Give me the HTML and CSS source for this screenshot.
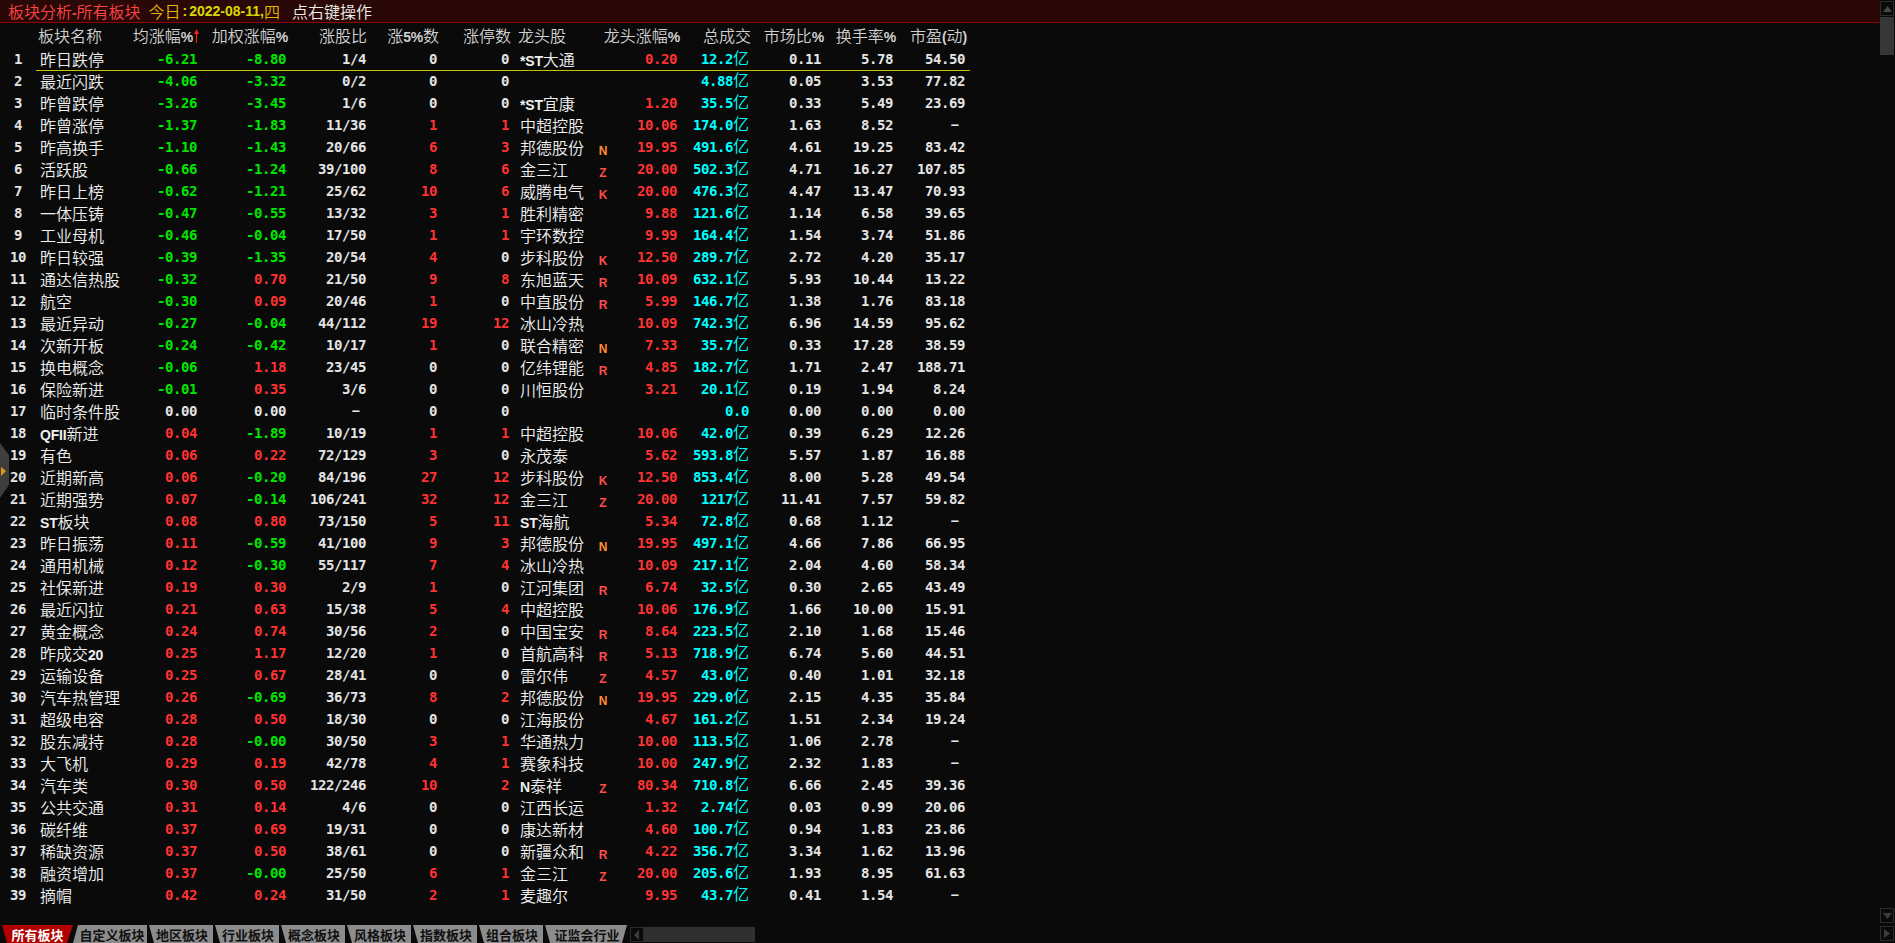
FILE: index.html
```html
<!DOCTYPE html>
<html lang="zh-CN">
<head>
<meta charset="utf-8">
<title>板块分析-所有板块</title>
<link rel="stylesheet" href="styles.css">
</head>
<body>
<div class="app">
<div class="left">
<header class="title">
<span class="zh t-red">板块分析<b class="l">-</b>所有板块</span>
<span class="zh t-gold">今日</span><span class="t-colon">:</span><span class="t-date">2022-08-11,</span><span class="zh t-gold">四</span>
<span class="zh t-hint">点右键操作</span>
</header>
<main class="table">
<div class="head zh">
<span></span><span class="nm">板块名称</span><span>均涨幅<b class="l">%</b><svg class="arrow" width="5" height="14" viewBox="0 0 5 14"><path d="M2.5 0 L5 5 L3 5 L3 14 L2 14 L2 5 L0 5 Z" fill="#ff2020"/></svg></span><span>加权涨幅<b class="l">%</b></span><span>涨股比</span><span>涨<b class="l">5%</b>数</span><span>涨停数</span><span class="ld">龙头股</span><span>龙头涨幅<b class="l">%</b></span><span>总成交</span><span>市场比<b class="l">%</b></span><span>换手率<b class="l">%</b></span><span>市盈<b class="l">(</b>动<b class="l">)</b></span>
</div>
<div class="row cur"><span class="idx">1</span><span class="nm zh">昨日跌停</span><span class="g">-6.21</span><span class="g">-8.80</span><span>1/4</span><span>0</span><span>0</span><span class="ld zh"><b class="l">*ST</b>大通</span><span class="fl"></span><span class="r">0.20</span><span class="c">12.2<i class="zh">亿</i></span><span>0.11</span><span>5.78</span><span>54.50</span></div>
<div class="row"><span class="idx">2</span><span class="nm zh">最近闪跌</span><span class="g">-4.06</span><span class="g">-3.32</span><span>0/2</span><span>0</span><span>0</span><span class="ld zh"></span><span class="fl"></span><span class="r"></span><span class="c">4.88<i class="zh">亿</i></span><span>0.05</span><span>3.53</span><span>77.82</span></div>
<div class="row"><span class="idx">3</span><span class="nm zh">昨曾跌停</span><span class="g">-3.26</span><span class="g">-3.45</span><span>1/6</span><span>0</span><span>0</span><span class="ld zh"><b class="l">*ST</b>宜康</span><span class="fl"></span><span class="r">1.20</span><span class="c">35.5<i class="zh">亿</i></span><span>0.33</span><span>5.49</span><span>23.69</span></div>
<div class="row"><span class="idx">4</span><span class="nm zh">昨曾涨停</span><span class="g">-1.37</span><span class="g">-1.83</span><span>11/36</span><span class="r">1</span><span class="r">1</span><span class="ld zh">中超控股</span><span class="fl"></span><span class="r">10.06</span><span class="c">174.0<i class="zh">亿</i></span><span>1.63</span><span>8.52</span><span class="dash">—</span></div>
<div class="row"><span class="idx">5</span><span class="nm zh">昨高换手</span><span class="g">-1.10</span><span class="g">-1.43</span><span>20/66</span><span class="r">6</span><span class="r">3</span><span class="ld zh">邦德股份</span><span class="fl o">N</span><span class="r">19.95</span><span class="c">491.6<i class="zh">亿</i></span><span>4.61</span><span>19.25</span><span>83.42</span></div>
<div class="row"><span class="idx">6</span><span class="nm zh">活跃股</span><span class="g">-0.66</span><span class="g">-1.24</span><span>39/100</span><span class="r">8</span><span class="r">6</span><span class="ld zh">金三江</span><span class="fl">Z</span><span class="r">20.00</span><span class="c">502.3<i class="zh">亿</i></span><span>4.71</span><span>16.27</span><span>107.85</span></div>
<div class="row"><span class="idx">7</span><span class="nm zh">昨日上榜</span><span class="g">-0.62</span><span class="g">-1.21</span><span>25/62</span><span class="r">10</span><span class="r">6</span><span class="ld zh">威腾电气</span><span class="fl">K</span><span class="r">20.00</span><span class="c">476.3<i class="zh">亿</i></span><span>4.47</span><span>13.47</span><span>70.93</span></div>
<div class="row"><span class="idx">8</span><span class="nm zh">一体压铸</span><span class="g">-0.47</span><span class="g">-0.55</span><span>13/32</span><span class="r">3</span><span class="r">1</span><span class="ld zh">胜利精密</span><span class="fl"></span><span class="r">9.88</span><span class="c">121.6<i class="zh">亿</i></span><span>1.14</span><span>6.58</span><span>39.65</span></div>
<div class="row"><span class="idx">9</span><span class="nm zh">工业母机</span><span class="g">-0.46</span><span class="g">-0.04</span><span>17/50</span><span class="r">1</span><span class="r">1</span><span class="ld zh">宇环数控</span><span class="fl"></span><span class="r">9.99</span><span class="c">164.4<i class="zh">亿</i></span><span>1.54</span><span>3.74</span><span>51.86</span></div>
<div class="row"><span class="idx">10</span><span class="nm zh">昨日较强</span><span class="g">-0.39</span><span class="g">-1.35</span><span>20/54</span><span class="r">4</span><span>0</span><span class="ld zh">步科股份</span><span class="fl">K</span><span class="r">12.50</span><span class="c">289.7<i class="zh">亿</i></span><span>2.72</span><span>4.20</span><span>35.17</span></div>
<div class="row"><span class="idx">11</span><span class="nm zh">通达信热股</span><span class="g">-0.32</span><span class="r">0.70</span><span>21/50</span><span class="r">9</span><span class="r">8</span><span class="ld zh">东旭蓝天</span><span class="fl">R</span><span class="r">10.09</span><span class="c">632.1<i class="zh">亿</i></span><span>5.93</span><span>10.44</span><span>13.22</span></div>
<div class="row"><span class="idx">12</span><span class="nm zh">航空</span><span class="g">-0.30</span><span class="r">0.09</span><span>20/46</span><span class="r">1</span><span>0</span><span class="ld zh">中直股份</span><span class="fl">R</span><span class="r">5.99</span><span class="c">146.7<i class="zh">亿</i></span><span>1.38</span><span>1.76</span><span>83.18</span></div>
<div class="row"><span class="idx">13</span><span class="nm zh">最近异动</span><span class="g">-0.27</span><span class="g">-0.04</span><span>44/112</span><span class="r">19</span><span class="r">12</span><span class="ld zh">冰山冷热</span><span class="fl"></span><span class="r">10.09</span><span class="c">742.3<i class="zh">亿</i></span><span>6.96</span><span>14.59</span><span>95.62</span></div>
<div class="row"><span class="idx">14</span><span class="nm zh">次新开板</span><span class="g">-0.24</span><span class="g">-0.42</span><span>10/17</span><span class="r">1</span><span>0</span><span class="ld zh">联合精密</span><span class="fl o">N</span><span class="r">7.33</span><span class="c">35.7<i class="zh">亿</i></span><span>0.33</span><span>17.28</span><span>38.59</span></div>
<div class="row"><span class="idx">15</span><span class="nm zh">换电概念</span><span class="g">-0.06</span><span class="r">1.18</span><span>23/45</span><span>0</span><span>0</span><span class="ld zh">亿纬锂能</span><span class="fl">R</span><span class="r">4.85</span><span class="c">182.7<i class="zh">亿</i></span><span>1.71</span><span>2.47</span><span>188.71</span></div>
<div class="row"><span class="idx">16</span><span class="nm zh">保险新进</span><span class="g">-0.01</span><span class="r">0.35</span><span>3/6</span><span>0</span><span>0</span><span class="ld zh">川恒股份</span><span class="fl"></span><span class="r">3.21</span><span class="c">20.1<i class="zh">亿</i></span><span>0.19</span><span>1.94</span><span>8.24</span></div>
<div class="row"><span class="idx">17</span><span class="nm zh">临时条件股</span><span>0.00</span><span>0.00</span><span class="dash">—</span><span>0</span><span>0</span><span class="ld zh"></span><span class="fl"></span><span class="r"></span><span class="c">0.0</span><span>0.00</span><span>0.00</span><span>0.00</span></div>
<div class="row"><span class="idx">18</span><span class="nm zh"><b class="l">QFII</b>新进</span><span class="r">0.04</span><span class="g">-1.89</span><span>10/19</span><span class="r">1</span><span class="r">1</span><span class="ld zh">中超控股</span><span class="fl"></span><span class="r">10.06</span><span class="c">42.0<i class="zh">亿</i></span><span>0.39</span><span>6.29</span><span>12.26</span></div>
<div class="row"><span class="idx">19</span><span class="nm zh">有色</span><span class="r">0.06</span><span class="r">0.22</span><span>72/129</span><span class="r">3</span><span>0</span><span class="ld zh">永茂泰</span><span class="fl"></span><span class="r">5.62</span><span class="c">593.8<i class="zh">亿</i></span><span>5.57</span><span>1.87</span><span>16.88</span></div>
<div class="row"><span class="idx">20</span><span class="nm zh">近期新高</span><span class="r">0.06</span><span class="g">-0.20</span><span>84/196</span><span class="r">27</span><span class="r">12</span><span class="ld zh">步科股份</span><span class="fl">K</span><span class="r">12.50</span><span class="c">853.4<i class="zh">亿</i></span><span>8.00</span><span>5.28</span><span>49.54</span></div>
<div class="row"><span class="idx">21</span><span class="nm zh">近期强势</span><span class="r">0.07</span><span class="g">-0.14</span><span>106/241</span><span class="r">32</span><span class="r">12</span><span class="ld zh">金三江</span><span class="fl">Z</span><span class="r">20.00</span><span class="c">1217<i class="zh">亿</i></span><span>11.41</span><span>7.57</span><span>59.82</span></div>
<div class="row"><span class="idx">22</span><span class="nm zh"><b class="l">ST</b>板块</span><span class="r">0.08</span><span class="r">0.80</span><span>73/150</span><span class="r">5</span><span class="r">11</span><span class="ld zh"><b class="l">ST</b>海航</span><span class="fl"></span><span class="r">5.34</span><span class="c">72.8<i class="zh">亿</i></span><span>0.68</span><span>1.12</span><span class="dash">—</span></div>
<div class="row"><span class="idx">23</span><span class="nm zh">昨日振荡</span><span class="r">0.11</span><span class="g">-0.59</span><span>41/100</span><span class="r">9</span><span class="r">3</span><span class="ld zh">邦德股份</span><span class="fl o">N</span><span class="r">19.95</span><span class="c">497.1<i class="zh">亿</i></span><span>4.66</span><span>7.86</span><span>66.95</span></div>
<div class="row"><span class="idx">24</span><span class="nm zh">通用机械</span><span class="r">0.12</span><span class="g">-0.30</span><span>55/117</span><span class="r">7</span><span class="r">4</span><span class="ld zh">冰山冷热</span><span class="fl"></span><span class="r">10.09</span><span class="c">217.1<i class="zh">亿</i></span><span>2.04</span><span>4.60</span><span>58.34</span></div>
<div class="row"><span class="idx">25</span><span class="nm zh">社保新进</span><span class="r">0.19</span><span class="r">0.30</span><span>2/9</span><span class="r">1</span><span>0</span><span class="ld zh">江河集团</span><span class="fl">R</span><span class="r">6.74</span><span class="c">32.5<i class="zh">亿</i></span><span>0.30</span><span>2.65</span><span>43.49</span></div>
<div class="row"><span class="idx">26</span><span class="nm zh">最近闪拉</span><span class="r">0.21</span><span class="r">0.63</span><span>15/38</span><span class="r">5</span><span class="r">4</span><span class="ld zh">中超控股</span><span class="fl"></span><span class="r">10.06</span><span class="c">176.9<i class="zh">亿</i></span><span>1.66</span><span>10.00</span><span>15.91</span></div>
<div class="row"><span class="idx">27</span><span class="nm zh">黄金概念</span><span class="r">0.24</span><span class="r">0.74</span><span>30/56</span><span class="r">2</span><span>0</span><span class="ld zh">中国宝安</span><span class="fl">R</span><span class="r">8.64</span><span class="c">223.5<i class="zh">亿</i></span><span>2.10</span><span>1.68</span><span>15.46</span></div>
<div class="row"><span class="idx">28</span><span class="nm zh">昨成交<b class="l">20</b></span><span class="r">0.25</span><span class="r">1.17</span><span>12/20</span><span class="r">1</span><span>0</span><span class="ld zh">首航高科</span><span class="fl">R</span><span class="r">5.13</span><span class="c">718.9<i class="zh">亿</i></span><span>6.74</span><span>5.60</span><span>44.51</span></div>
<div class="row"><span class="idx">29</span><span class="nm zh">运输设备</span><span class="r">0.25</span><span class="r">0.67</span><span>28/41</span><span>0</span><span>0</span><span class="ld zh">雷尔伟</span><span class="fl">Z</span><span class="r">4.57</span><span class="c">43.0<i class="zh">亿</i></span><span>0.40</span><span>1.01</span><span>32.18</span></div>
<div class="row"><span class="idx">30</span><span class="nm zh">汽车热管理</span><span class="r">0.26</span><span class="g">-0.69</span><span>36/73</span><span class="r">8</span><span class="r">2</span><span class="ld zh">邦德股份</span><span class="fl o">N</span><span class="r">19.95</span><span class="c">229.0<i class="zh">亿</i></span><span>2.15</span><span>4.35</span><span>35.84</span></div>
<div class="row"><span class="idx">31</span><span class="nm zh">超级电容</span><span class="r">0.28</span><span class="r">0.50</span><span>18/30</span><span>0</span><span>0</span><span class="ld zh">江海股份</span><span class="fl"></span><span class="r">4.67</span><span class="c">161.2<i class="zh">亿</i></span><span>1.51</span><span>2.34</span><span>19.24</span></div>
<div class="row"><span class="idx">32</span><span class="nm zh">股东减持</span><span class="r">0.28</span><span class="g">-0.00</span><span>30/50</span><span class="r">3</span><span class="r">1</span><span class="ld zh">华通热力</span><span class="fl"></span><span class="r">10.00</span><span class="c">113.5<i class="zh">亿</i></span><span>1.06</span><span>2.78</span><span class="dash">—</span></div>
<div class="row"><span class="idx">33</span><span class="nm zh">大飞机</span><span class="r">0.29</span><span class="r">0.19</span><span>42/78</span><span class="r">4</span><span class="r">1</span><span class="ld zh">赛象科技</span><span class="fl"></span><span class="r">10.00</span><span class="c">247.9<i class="zh">亿</i></span><span>2.32</span><span>1.83</span><span class="dash">—</span></div>
<div class="row"><span class="idx">34</span><span class="nm zh">汽车类</span><span class="r">0.30</span><span class="r">0.50</span><span>122/246</span><span class="r">10</span><span class="r">2</span><span class="ld zh"><b class="l">N</b>泰祥</span><span class="fl">Z</span><span class="r">80.34</span><span class="c">710.8<i class="zh">亿</i></span><span>6.66</span><span>2.45</span><span>39.36</span></div>
<div class="row"><span class="idx">35</span><span class="nm zh">公共交通</span><span class="r">0.31</span><span class="r">0.14</span><span>4/6</span><span>0</span><span>0</span><span class="ld zh">江西长运</span><span class="fl"></span><span class="r">1.32</span><span class="c">2.74<i class="zh">亿</i></span><span>0.03</span><span>0.99</span><span>20.06</span></div>
<div class="row"><span class="idx">36</span><span class="nm zh">碳纤维</span><span class="r">0.37</span><span class="r">0.69</span><span>19/31</span><span>0</span><span>0</span><span class="ld zh">康达新材</span><span class="fl"></span><span class="r">4.60</span><span class="c">100.7<i class="zh">亿</i></span><span>0.94</span><span>1.83</span><span>23.86</span></div>
<div class="row"><span class="idx">37</span><span class="nm zh">稀缺资源</span><span class="r">0.37</span><span class="r">0.50</span><span>38/61</span><span>0</span><span>0</span><span class="ld zh">新疆众和</span><span class="fl">R</span><span class="r">4.22</span><span class="c">356.7<i class="zh">亿</i></span><span>3.34</span><span>1.62</span><span>13.96</span></div>
<div class="row"><span class="idx">38</span><span class="nm zh">融资增加</span><span class="r">0.37</span><span class="g">-0.00</span><span>25/50</span><span class="r">6</span><span class="r">1</span><span class="ld zh">金三江</span><span class="fl">Z</span><span class="r">20.00</span><span class="c">205.6<i class="zh">亿</i></span><span>1.93</span><span>8.95</span><span>61.63</span></div>
<div class="row"><span class="idx">39</span><span class="nm zh">摘帽</span><span class="r">0.42</span><span class="r">0.24</span><span>31/50</span><span class="r">2</span><span class="r">1</span><span class="ld zh">麦趣尔</span><span class="fl"></span><span class="r">9.95</span><span class="c">43.7<i class="zh">亿</i></span><span>0.41</span><span>1.54</span><span class="dash">—</span></div>
</main>
<footer class="tabs">
<span class="tab active">所有板块</span>
<span class="tab wide">自定义板块</span>
<span class="tab">地区板块</span>
<span class="tab">行业板块</span>
<span class="tab">概念板块</span>
<span class="tab">风格板块</span>
<span class="tab">指数板块</span>
<span class="tab">组合板块</span>
<span class="tab last">证监会行业</span>
<div class="hbar">
<span class="sbtn"><svg width="6" height="10" viewBox="0 0 6 10"><path d="M5 0 V10 L0 5 Z" fill="#3c3c3c"/></svg></span>
<span class="htrack"></span>
</div>
</footer>
</div>
<aside class="vbar">
<span class="sbtn"><svg width="9" height="6" viewBox="0 0 9 6"><path d="M4.5 0 L9 6 H0 Z" fill="#484848"/></svg></span>
<span class="thumb"></span>
<span class="vspace"></span>
<span class="sbtn"><svg width="9" height="6" viewBox="0 0 9 6"><path d="M0 0 H9 L4.5 6 Z" fill="#3c3c3c"/></svg></span>
<span class="sbtn end"><svg width="6" height="9" viewBox="0 0 6 9"><path d="M0 0 L6 4.5 L0 9 Z" fill="#3c3c3c"/></svg></span>
</aside>
<svg class="handle" width="10" height="56" viewBox="0 0 10 56"><path d="M0 0 L9 12 V42 L0 55 Z" fill="#3e3e3e"/><path d="M1 24 L6 28 L1 33 Z" fill="#e09a10"/></svg>
</div>
</body>
</html>
```
FILE: styles.css
```css
* { box-sizing: border-box; }
html, body { margin: 0; height: 100%; overflow: hidden; background: #0a0a0a; }
body {
  font-family: "DejaVu Sans Mono", "Noto Sans CJK SC", monospace;
  font-size: 14px;
  font-weight: 700;
  letter-spacing: -0.43px;
  color: #e4e4e4;
}
.zh {
  font-family: "Noto Sans CJK SC", "Liberation Sans", sans-serif;
  font-size: 16px;
  font-weight: 350;
  letter-spacing: 0;
}
.l {
  font-family: "Liberation Sans", sans-serif;
  font-size: 14px;
  font-weight: 700;
  letter-spacing: -0.2px;
}
i { font-style: normal; }

.app { display: flex; height: 943px; }
.left { flex: 1; min-width: 0; display: flex; flex-direction: column; }

.title {
  height: 23px;
  flex: none;
  display: flex;
  align-items: center;
  padding-left: 8px;
  background: #2a0808;
  border-bottom: 1px solid #8c0000;
}
.t-red { color: #ff4444; margin-right: 8px; }
.t-gold { color: #e0b800; }
.t-colon, .t-date {
  font-family: "Liberation Sans", sans-serif;
  font-size: 14px;
  letter-spacing: 0;
  color: #d8d800;
}
.t-colon { margin: 0 2px; }
.t-hint { color: #f0f0e8; margin-left: 12px; }

.table { flex: 1; min-height: 0; }
.head, .row { display: grid; width: 970px; text-align: right; white-space: nowrap; }
.head {
  height: 26px;
  padding-bottom: 3px;
  align-items: center;
  color: #d0d0d0;
  grid-template-columns: 36px 92px 71px 89px 79px 72px 72px 86px 83px 71px 73px 72px 71px;
}
.head .nm { padding-left: 2px; text-align: left; }
.head .ld { padding-left: 7px; text-align: left; }
.arrow { margin-left: 1px; vertical-align: -1px; }

.row {
  height: 22px;
  line-height: 21px;
  align-items: start;
  grid-template-columns: 36px 104px 57px 89px 80px 71px 72px 87px 14px 67px 72px 72px 72px 72px;
}
.row.cur { background: linear-gradient(#c4c400, #c4c400) 36px 21px / 934px 1px no-repeat; }
.idx { text-align: center; }
.row .nm { padding-left: 4px; text-align: left; color: #f0f0f0; }
.row .ld { padding-left: 11px; text-align: left; color: #f0f0f0; }
.fl {
  font-family: "Liberation Sans", sans-serif;
  font-size: 12px;
  letter-spacing: 0;
  line-height: 16px;
  padding-top: 6px;
  text-align: center;
  color: #ff4c4c;
}
.fl.o { color: #ff8c32; }
.r { color: #ff3232; }
.g { color: #00e600; }
.c { color: #00ffff; }
.c .zh { line-height: 0; }
.dash { padding-right: 7px; font-size: 12px; }

.tabs {
  height: 18px;
  flex: none;
  display: flex;
  padding-left: 2px;
}
.tab {
  width: 66px;
  height: 18px;
  display: flex;
  align-items: center;
  justify-content: center;
  padding-left: 4px;
  font-family: "Noto Sans CJK SC", sans-serif;
  font-size: 13px;
  font-weight: 700;
  letter-spacing: 0;
  color: #101010;
  background: #8c8c8c;
  clip-path: polygon(2px 0, 100% 0, 100% 100%, 7px 100%);
}
.tab.active {
  width: 71px;
  padding-left: 0;
  color: #fff;
  background: #b00000;
  clip-path: polygon(0 0, 100% 0, calc(100% - 6px) 100%, 5px 100%);
}
.tab.wide {
  width: 74px;
  clip-path: polygon(5px 0, 100% 0, 100% 100%, 0 100%);
}
.tab.last {
  width: 84px;
  clip-path: polygon(2px 0, 100% 0, calc(100% - 5px) 100%, 7px 100%);
}
.hbar { display: flex; height: 15px; margin: 2px 0 0 3px; }
.sbtn {
  width: 14px;
  height: 15px;
  flex: none;
  display: flex;
  align-items: center;
  justify-content: center;
  border: 1px solid #2c2c2c;
}
.htrack { width: 111px; background: #303030; }

.vbar {
  width: 15px;
  flex: none;
  display: flex;
  flex-direction: column;
  padding: 1px 1px 2px 0;
}
.thumb { height: 38px; background: #363636; margin: 1px 0; }
.vspace { flex: 1; }
.vbar .sbtn.end { margin-top: 3px; }
.handle { position: absolute; left: 0; top: 443px; }
```
